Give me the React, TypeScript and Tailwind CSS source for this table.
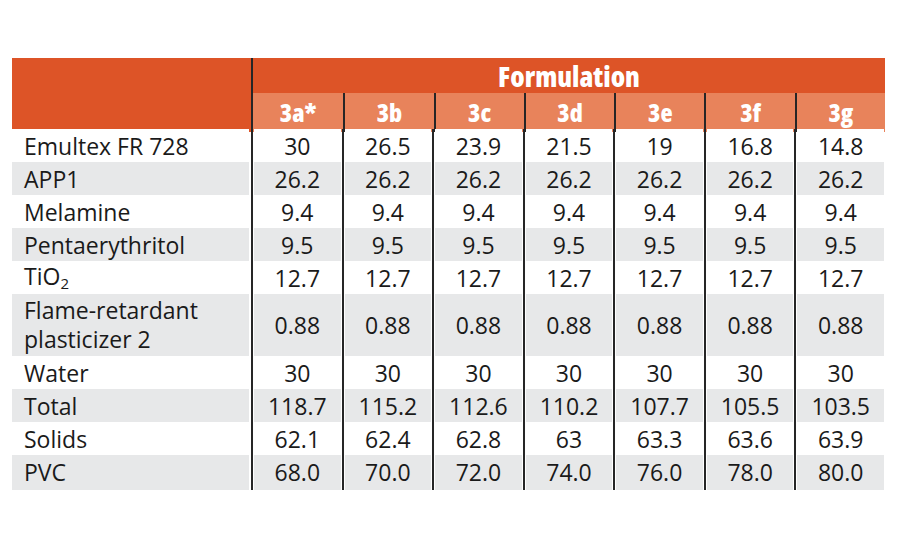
const columns = ['3a*', '3b', '3c', '3d', '3e', '3f', '3g'];

type Row = { label: React.ReactNode; values: string[]; tall?: boolean };

const rows: Row[] = [
  { label: 'Emultex FR 728', values: ['30', '26.5', '23.9', '21.5', '19', '16.8', '14.8'] },
  { label: 'APP1', values: ['26.2', '26.2', '26.2', '26.2', '26.2', '26.2', '26.2'] },
  { label: 'Melamine', values: ['9.4', '9.4', '9.4', '9.4', '9.4', '9.4', '9.4'] },
  { label: 'Pentaerythritol', values: ['9.5', '9.5', '9.5', '9.5', '9.5', '9.5', '9.5'] },
  {
    label: (
      <span>
        TiO<span className="text-[15px] relative top-[4px]">2</span>
      </span>
    ),
    values: ['12.7', '12.7', '12.7', '12.7', '12.7', '12.7', '12.7'],
  },
  {
    label: (
      <span>
        Flame-retardant
        <br />
        plasticizer 2
      </span>
    ),
    values: ['0.88', '0.88', '0.88', '0.88', '0.88', '0.88', '0.88'],
    tall: true,
  },
  { label: 'Water', values: ['30', '30', '30', '30', '30', '30', '30'] },
  { label: 'Total', values: ['118.7', '115.2', '112.6', '110.2', '107.7', '105.5', '103.5'] },
  { label: 'Solids', values: ['62.1', '62.4', '62.8', '63', '63.3', '63.6', '63.9'] },
  { label: 'PVC', values: ['68.0', '70.0', '72.0', '74.0', '76.0', '78.0', '80.0'] },
];

function DataRow({ row, striped }: { row: Row; striped: boolean }) {
  const height = row.tall ? 'h-[62px]' : 'h-[33px]';
  const bg = striped ? 'bg-[#e7e8e9]' : 'bg-white';
  return (
    <div className={`grid grid-cols-[239px_repeat(7,1fr)] ${height}`}>
      <div className="flex">
        <div className={`flex-1 flex items-center pl-3 mr-[2px] leading-[29px] ${bg}`}>{row.label}</div>
      </div>
      {row.values.map((v, i) => (
        <div key={i} className="flex border-l-2 border-[#262626]">
          <div className={`flex-1 flex items-center justify-center ml-px mr-px ${bg}`}>{v}</div>
        </div>
      ))}
    </div>
  );
}

export default function App() {
  return (
    <div className="w-[900px] h-[550px] bg-white pt-[58px] pl-3 font-['Open_Sans',sans-serif] text-[23px] text-[#1a1a1a]">
      <div className="w-[873px]">
        {/* Header */}
        <div className="grid grid-cols-[239px_1fr] h-[71px]">
          <div className="bg-[#dd5427]" />
          <div className="flex flex-col border-l-2 border-[#262626]">
            <div className="h-[35px] bg-[#dd5427] flex items-center justify-center text-white font-extrabold text-[28px] [font-stretch:78%]">
              Formulation
            </div>
            <div className="flex-1 grid grid-cols-7 bg-[#e8835b]">
              {columns.map((c, i) => (
                <div
                  key={c}
                  className={`flex items-center justify-center pt-px text-white font-extrabold text-[25px] [font-stretch:84%] ${
                    i === 0 ? '' : 'border-l-2 border-[#262626]'
                  }`}
                >
                  {c}
                </div>
              ))}
            </div>
          </div>
        </div>
        {/* Body */}
        {rows.map((row, i) => (
          <DataRow key={i} row={row} striped={i % 2 === 1} />
        ))}
      </div>
    </div>
  );
}
